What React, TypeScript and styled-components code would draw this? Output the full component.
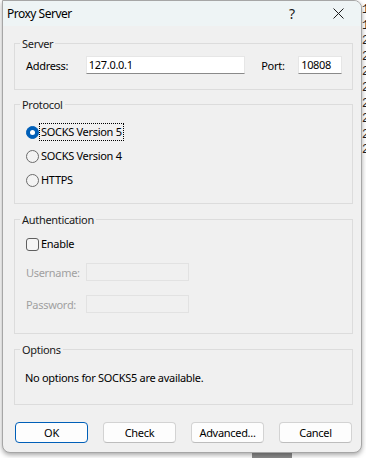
import React from "react";
import styled, { createGlobalStyle } from "styled-components";

const GlobalStyle = createGlobalStyle`
  html, body {
    margin: 0;
    padding: 0;
    background: #ffffff;
  }
  body {
    font-family: "Segoe UI", "Noto Sans", "Liberation Sans", sans-serif;
    font-size: 11px;
    letter-spacing: -0.3px;
    color: #000;
  }
  * {
    box-sizing: border-box;
  }
`;

const Desktop = styled.div`
  width: 366px;
  height: 458px;
  overflow: hidden;
  display: flex;
  flex-direction: column;
  background: #ffffff;
`;

const DesktopRow = styled.div`
  display: flex;
  padding-left: 2px;
`;

const BackgroundText = styled.div`
  width: 4px;
  overflow: hidden;
  padding-top: 3px;
  font-family: "Liberation Mono", monospace;
  font-size: 12px;
  letter-spacing: 0;
  line-height: 15.6px;
  color: #222;
  white-space: pre;
`;

const BottomStrip = styled.div`
  height: 5px;
  display: flex;
  padding-left: 252px;
`;

const TaskBlock = styled.div`
  width: 40px;
  height: 5px;
  background: #8c8c8c;
`;

const Window = styled.div`
  width: 360px;
  height: 453px;
  border: 1px solid #a6a6a6;
  border-radius: 0 8px 8px 8px;
  background: #f0f0f0;
  box-shadow: 0 2px 5px rgba(0, 0, 0, 0.35);
  display: flex;
  flex-direction: column;
  overflow: hidden;
  position: relative;
  z-index: 1;
`;

const TitleBar = styled.div`
  height: 25px;
  display: flex;
  align-items: center;
  background: #eef4f5;
  padding-left: 4px;
`;

const Title = styled.div`
  flex: 1;
  font-size: 12px;
  letter-spacing: -0.5px;
  line-height: 25px;
`;

const CaptionButton = styled.div`
  width: 46px;
  height: 25px;
  display: flex;
  align-items: center;
  justify-content: center;
  font-size: 14px;
  letter-spacing: 0;
  color: #1a1a1a;
`;

const Body = styled.div`
  flex: 1;
  display: flex;
  flex-direction: column;
  padding: 0 8px 9px 11px;
`;

const GroupBox = styled.div<{ $top: number; $height: number }>`
  margin-top: ${(p) => p.$top}px;
  height: ${(p) => p.$height}px;
  border: 1px solid #dcdcdc;
  display: flex;
  flex-direction: column;
  padding: 0 10px 0 10px;
`;

const Legend = styled.div`
  align-self: flex-start;
  margin: -8px 0 0 -5px;
  padding: 0 2px;
  height: 16px;
  line-height: 16px;
  background: #f0f0f0;
  color: #1a1a1a;
`;

const Row = styled.div<{ $top: number; $height?: number }>`
  display: flex;
  align-items: center;
  margin-top: ${(p) => p.$top}px;
  height: ${(p) => p.$height ?? 18}px;
`;

const Label = styled.div<{ $width: number; $disabled?: boolean }>`
  width: ${(p) => p.$width}px;
  padding-left: 1px;
  color: ${(p) => (p.$disabled ? "#a0a0a0" : "#000")};
`;

const TextBox = styled.div<{ $width: number; $disabled?: boolean }>`
  width: ${(p) => p.$width}px;
  height: 18px;
  line-height: 16px;
  padding-left: 2px;
  background: ${(p) => (p.$disabled ? "#f0f0f0" : "#ffffff")};
  border: 1px solid ${(p) => (p.$disabled ? "#e2e2e2" : "#e6e6e6")};
  border-bottom-color: ${(p) => (p.$disabled ? "#e2e2e2" : "#8a8a8a")};
`;

const Spacer = styled.div<{ $width: number }>`
  width: ${(p) => p.$width}px;
`;

const Radio = styled.div<{ $checked?: boolean }>`
  width: 13px;
  height: 13px;
  border-radius: 50%;
  margin-left: 1px;
  flex: none;
  display: flex;
  align-items: center;
  justify-content: center;
  background: ${(p) => (p.$checked ? "#005fb8" : "#f3f3f3")};
  border: 1px solid ${(p) => (p.$checked ? "#005fb8" : "#6b6b6b")};
  &::after {
    content: "";
    display: ${(p) => (p.$checked ? "block" : "none")};
    width: 5px;
    height: 5px;
    border-radius: 50%;
    background: #ffffff;
  }
`;

const Checkbox = styled.div`
  width: 13px;
  height: 13px;
  margin-left: 1px;
  border-radius: 3px;
  border: 1px solid #5f5f5f;
  background: #f5f5f5;
  flex: none;
`;

const OptionText = styled.span<{ $focused?: boolean }>`
  margin-left: 1px;
  padding: 0 1px;
  height: 16px;
  line-height: 16px;
  outline: ${(p) => (p.$focused ? "1px dotted #000" : "none")};
  outline-offset: 0;
`;

const Note = styled.div`
  margin-top: 12px;
  height: 16px;
  line-height: 16px;
`;

const ButtonRow = styled.div`
  margin-top: 17px;
  display: flex;
  justify-content: space-between;
  padding: 0 1px 0 1px;
`;

const Button = styled.div<{ $default?: boolean }>`
  width: 73px;
  height: 21px;
  border-radius: 4px;
  display: flex;
  align-items: center;
  justify-content: center;
  background: #fdfdfd;
  border: 1px solid ${(p) => (p.$default ? "#005fb8" : "#d3d3d3")};
  border-bottom-color: ${(p) => (p.$default ? "#005fb8" : "#bdbdbd")};
`;

const CloseIcon = () => (
  <svg width="11" height="11" viewBox="0 0 11 11">
    <path d="M0.5 0.5 L10.5 10.5 M10.5 0.5 L0.5 10.5" stroke="#1a1a1a" strokeWidth="1" />
  </svg>
);

const protocols = [
  { label: "SOCKS Version 5", checked: true },
  { label: "SOCKS Version 4", checked: false },
  { label: "HTTPS", checked: false },
];

const bgLines = ["1", "1", "2", "2", "2", "2", "2", "2", "2", "2"];

export default function App() {
  return (
    <>
      <GlobalStyle />
      <Desktop>
        <DesktopRow>
          <Window>
            <TitleBar>
              <Title>Proxy Server</Title>
              <CaptionButton>?</CaptionButton>
              <CaptionButton>
                <CloseIcon />
              </CaptionButton>
            </TitleBar>
            <Body>
              <GroupBox $top={17} $height={47}>
                <Legend>Server</Legend>
                <Row $top={4}>
                  <Label $width={61}>Address:</Label>
                  <TextBox $width={160}>127.0.0.1</TextBox>
                  <Spacer $width={15} />
                  <Label $width={38}>Port:</Label>
                  <TextBox $width={44}>10808</TextBox>
                </Row>
              </GroupBox>

              <GroupBox $top={14} $height={100}>
                <Legend>Protocol</Legend>
                <Row $top={7} $height={0} />
                {protocols.map((p) => (
                  <Row key={p.label} $top={0} $height={24}>
                    <Radio $checked={p.checked} />
                    <OptionText $focused={p.checked}>{p.label}</OptionText>
                  </Row>
                ))}
              </GroupBox>

              <GroupBox $top={15} $height={115}>
                <Legend>Authentication</Legend>
                <Row $top={8} $height={16}>
                  <Checkbox />
                  <OptionText>Enable</OptionText>
                </Row>
                <Row $top={11}>
                  <Label $width={61} $disabled>
                    Username:
                  </Label>
                  <TextBox $width={103} $disabled />
                </Row>
                <Row $top={14}>
                  <Label $width={61} $disabled>
                    Password:
                  </Label>
                  <TextBox $width={103} $disabled />
                </Row>
              </GroupBox>

              <GroupBox $top={15} $height={56}>
                <Legend>Options</Legend>
                <Note>No options for SOCKS5 are available.</Note>
              </GroupBox>

              <ButtonRow>
                <Button $default>OK</Button>
                <Button>Check</Button>
                <Button>Advanced...</Button>
                <Button>Cancel</Button>
              </ButtonRow>
            </Body>
          </Window>
          <BackgroundText>{bgLines.join("\n")}</BackgroundText>
        </DesktopRow>
        <BottomStrip>
          <TaskBlock />
        </BottomStrip>
      </Desktop>
    </>
  );
}
